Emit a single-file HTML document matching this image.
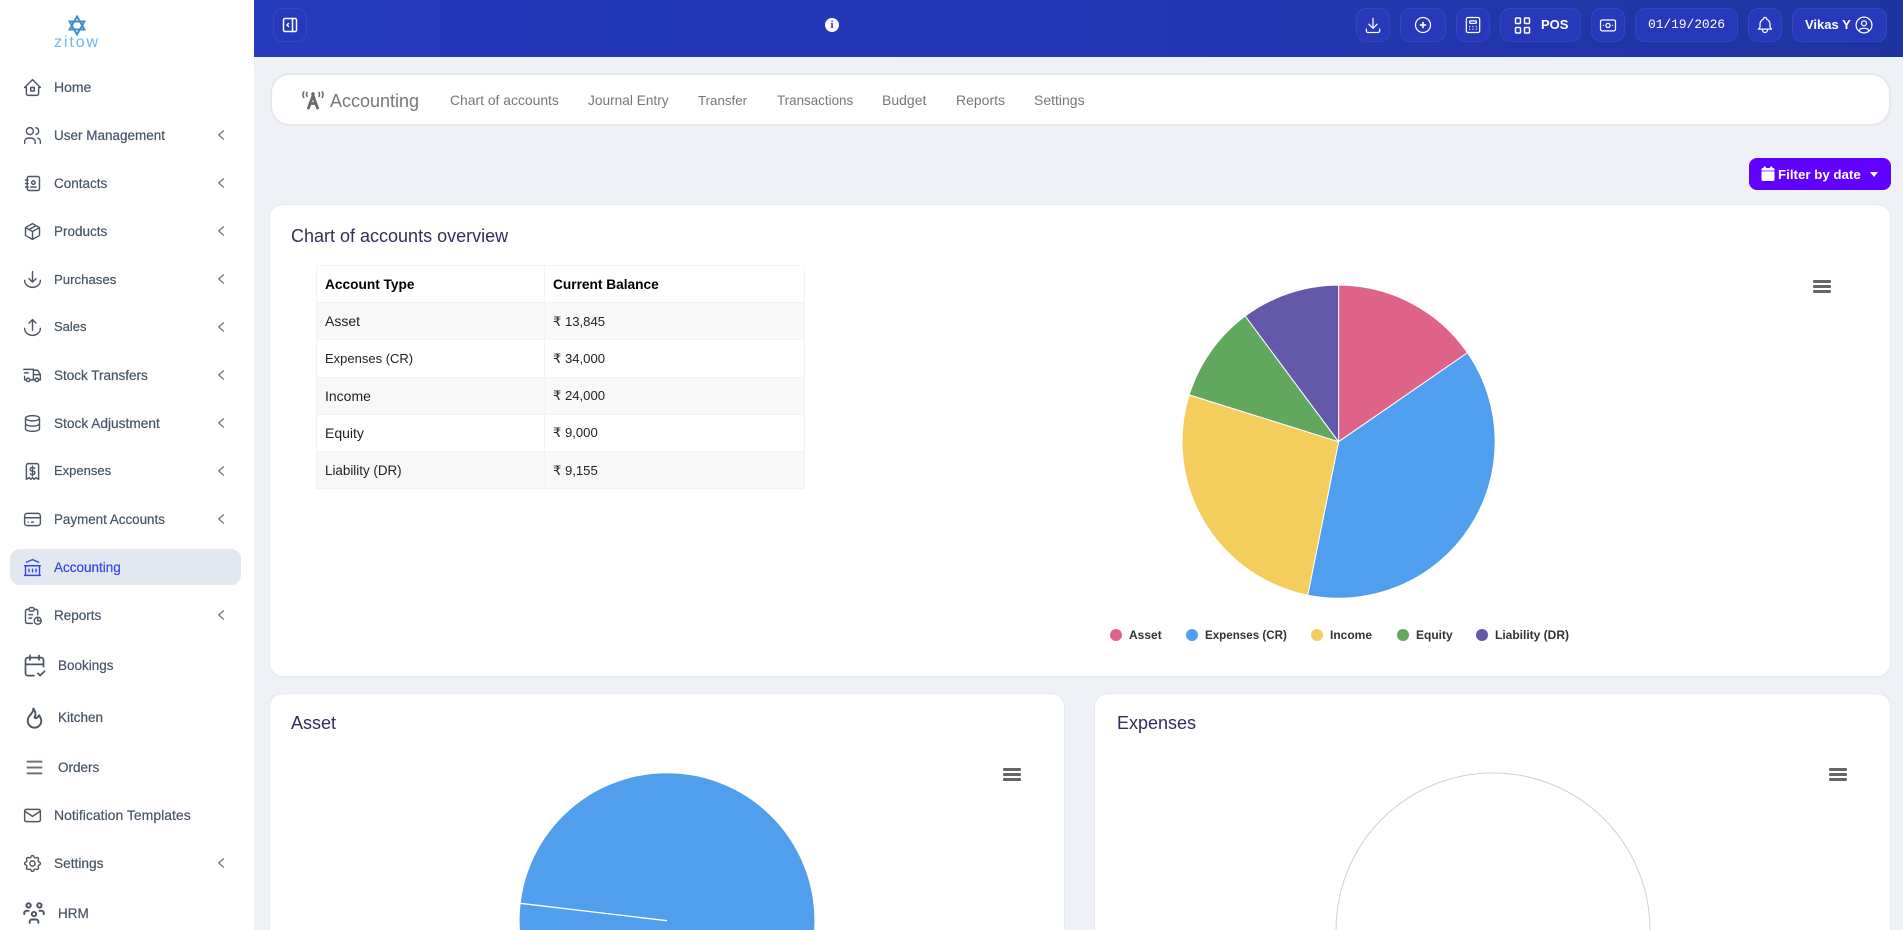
<!DOCTYPE html>
<html lang="en">
<head>
<meta charset="utf-8">
<title>Accounting</title>
<style>
html,body{margin:0;padding:0;width:1903px;height:930px;overflow:hidden;background:#eef1f6;font-family:"Liberation Sans",Arial,sans-serif}
*{box-sizing:border-box}
#wrap{position:relative;width:1903px;height:930px;overflow:hidden;background:#eef1f6}
.a{position:absolute}
#side{position:absolute;left:0;top:0;width:254px;height:930px;background:#fff;overflow:hidden}
.n{position:absolute;left:54px;height:36px;line-height:37px;font-size:13.5px;color:#475467;white-space:nowrap;-webkit-text-stroke:.2px #475467}
.n.b{left:58px}
.ic{position:absolute;left:21.5px;width:21px;height:21px;fill:none;stroke:#4b5563;stroke-width:1.6;stroke-linecap:round;stroke-linejoin:round}
.ch{position:absolute;left:218px;width:6px;height:10px;fill:none;stroke:#6b7280;stroke-width:1.3;stroke-linecap:round;stroke-linejoin:round}
#top{position:absolute;left:254px;top:0;width:1649px;height:57px;background:linear-gradient(90deg,#2539bd 0%,#2437b6 50%,#1f33a0 100%)}
.tb{position:absolute;top:8px;height:34px;background:#2739ba;border:1px solid #3346b8;border-radius:10px}
.ti{position:absolute;fill:none;stroke:#fff;stroke-width:1.5;stroke-linecap:round;stroke-linejoin:round}
.tt{position:absolute;color:#fff;white-space:nowrap;line-height:34px;top:8px}
.card{position:absolute;background:#fff;border:1px solid #e6e9ef;border-radius:14px}
.h{position:absolute;font-size:18px;color:#2f2f5c;white-space:nowrap;line-height:24px}
.l{position:absolute;top:90px;font-size:14px;line-height:20px;color:#777;white-space:nowrap}
table{position:absolute;left:316px;top:265px;width:489px;border-collapse:collapse;font-size:13.1px;color:#222;table-layout:fixed}
td,th{border:1px solid #f3f3f3;height:37.2px;padding:1px 0 0 8px;text-align:left;line-height:20px}
th{color:#000;font-weight:bold;font-size:13.7px}
tr.z td{background:#f8f8f8}
.lg{position:absolute;top:626px;font-size:12px;font-weight:bold;line-height:18px;color:#333;white-space:nowrap}
.d{position:absolute;top:628.7px;width:12px;height:12px;border-radius:50%}
.hb{position:absolute;width:18px;height:13px}
.hb i{position:absolute;left:0;width:100%;height:3.4px;background:#666;border-radius:1px}
</style>
</head>
<body>
<div id="wrap">

<div id="side">
  <svg class="a" style="left:68px;top:15px" width="18" height="21" viewBox="0 0 18 21" fill="none" stroke="#3d8fd0" stroke-width="1.9"><path d="M9 1.5L16.5 14.5H1.5Z"/><path d="M9 19.5L1.5 6.5H16.5Z"/></svg>
  <div class="a" style="left:54px;top:36px;font-size:16px;line-height:14px;letter-spacing:1.9px;color:#6db6ef">zitow</div>

  <svg class="ic" style="top:76.5px" viewBox="0 0 24 24"><path d="M5 12H3l9-9 9 9h-2M5 12v7a2 2 0 0 0 2 2h10a2 2 0 0 0 2-2v-7M10 12h4v4h-4z"/></svg>
  <div class="n" style="top:69px;font-size:14px;line-height:36px">Home</div>

  <svg class="ic" style="top:124.5px" viewBox="0 0 24 24"><path d="M5 7a4 4 0 1 0 8 0a4 4 0 1 0-8 0M3 21v-2a4 4 0 0 1 4-4h4a4 4 0 0 1 4 4v2M16 3.13a4 4 0 0 1 0 7.75M21 21v-2a4 4 0 0 0-3-3.85"/></svg>
  <div class="n" style="top:117px">User Management</div>
  <svg class="ch" style="top:130px" viewBox="0 0 6 10"><path d="M5.5.8L.8 5l4.7 4.2"/></svg>

  <svg class="ic" style="top:172.5px" viewBox="0 0 24 24"><path d="M20 6v12a2 2 0 0 1-2 2H8a2 2 0 0 1-2-2V6a2 2 0 0 1 2-2h10a2 2 0 0 1 2 2zM10 16h6M11 11a2 2 0 1 0 4 0a2 2 0 1 0-4 0M4 8h3M4 12h3M4 16h3"/></svg>
  <div class="n" style="top:165px">Contacts</div>
  <svg class="ch" style="top:178px" viewBox="0 0 6 10"><path d="M5.5.8L.8 5l4.7 4.2"/></svg>

  <svg class="ic" style="top:220.5px" viewBox="0 0 24 24"><path d="M12 3l8 4.5v9L12 21l-8-4.5v-9L12 3M12 12l8-4.5M12 12v9M12 12L4 7.5M16 5.25l-8 4.5"/></svg>
  <div class="n" style="top:213px">Products</div>
  <svg class="ch" style="top:226px" viewBox="0 0 6 10"><path d="M5.5.8L.8 5l4.7 4.2"/></svg>

  <svg class="ic" style="top:268.5px" viewBox="0 0 24 24"><path d="M12 3v12M8 11l4 4 4-4M3 13a9 8 0 0 0 18 0"/></svg>
  <div class="n" style="top:261px;font-size:13.2px">Purchases</div>
  <svg class="ch" style="top:274px" viewBox="0 0 6 10"><path d="M5.5.8L.8 5l4.7 4.2"/></svg>

  <svg class="ic" style="top:316.5px" viewBox="0 0 24 24"><path d="M12 15V3M8 7l4-4 4 4M3 13a9 8 0 0 0 18 0"/></svg>
  <div class="n" style="top:309px;font-size:13px;line-height:36px">Sales</div>
  <svg class="ch" style="top:322px" viewBox="0 0 6 10"><path d="M5.5.8L.8 5l4.7 4.2"/></svg>

  <svg class="ic" style="top:364.5px" viewBox="0 0 24 24"><path d="M5 17a2 2 0 1 0 4 0a2 2 0 1 0-4 0M15 17a2 2 0 1 0 4 0a2 2 0 1 0-4 0M5 17H3v-4M2 5h11v12M9 17h6M19 17h2v-6h-8M13 6h5l3 5M3 9h4"/></svg>
  <div class="n" style="top:357px">Stock Transfers</div>
  <svg class="ch" style="top:370px" viewBox="0 0 6 10"><path d="M5.5.8L.8 5l4.7 4.2"/></svg>

  <svg class="ic" style="top:412.5px" viewBox="0 0 24 24"><path d="M4 6a8 3 0 1 0 16 0a8 3 0 1 0-16 0M4 6v6a8 3 0 0 0 16 0V6M4 12v6a8 3 0 0 0 16 0v-6"/></svg>
  <div class="n" style="top:405px;font-size:13.7px">Stock Adjustment</div>
  <svg class="ch" style="top:418px" viewBox="0 0 6 10"><path d="M5.5.8L.8 5l4.7 4.2"/></svg>

  <svg class="ic" style="top:460.5px" viewBox="0 0 24 24"><path d="M5 21V5a2 2 0 0 1 2-2h10a2 2 0 0 1 2 2v16l-3-2-2 2-2-2-2 2-2-2-3 2M14.5 8.5a2 2 0 0 0-1.8-1h-1.4a2 2 0 0 0 0 4h1.400a2 2 0 0 1 0 4h-1.4a2 2 0 0 1-1.8-1M12 6v11"/></svg>
  <div class="n" style="top:453px;font-size:13px;line-height:36px">Expenses</div>
  <svg class="ch" style="top:466px" viewBox="0 0 6 10"><path d="M5.5.8L.8 5l4.7 4.2"/></svg>

  <svg class="ic" style="top:508.5px" viewBox="0 0 24 24"><rect x="3" y="5" width="18" height="14" rx="3"/><path d="M3 10h18M7 15h.01M11 15h2"/></svg>
  <div class="n" style="top:501px;font-size:13.4px">Payment Accounts</div>
  <svg class="ch" style="top:514px" viewBox="0 0 6 10"><path d="M5.5.8L.8 5l4.7 4.2"/></svg>

  <div class="a" style="left:10px;top:549px;width:231px;height:36px;background:#e3e7ef;border-radius:10px"></div>
  <svg class="ic" style="top:556.5px;stroke:#3346e8" viewBox="0 0 24 24"><path d="M3 21h18M3 10h18M5 6l7-3 7 3M4 10v11M20 10v11M8 14v3M12 14v3M16 14v3"/></svg>
  <div class="n" style="top:549px;color:#3346e8;-webkit-text-stroke:.2px #3346e8">Accounting</div>

  <svg class="ic" style="top:604.5px" viewBox="0 0 24 24"><path d="M8 5H6a2 2 0 0 0-2 2v12a2 2 0 0 0 2 2h5.7M18 14v4h4M18 11V7a2 2 0 0 0-2-2h-2M8 5a2 2 0 0 1 2-2h2a2 2 0 0 1 2 2a2 2 0 0 1-2 2h-2a2 2 0 0 1-2-2zM14 18a4 4 0 1 0 8 0a4 4 0 1 0-8 0M8 11h4M8 15h3"/></svg>
  <div class="n" style="top:597px">Reports</div>
  <svg class="ch" style="top:610px" viewBox="0 0 6 10"><path d="M5.5.8L.8 5l4.7 4.2"/></svg>

  <svg class="ic" style="left:20.5px;top:651.5px;width:27px;height:27px;stroke-width:1.5" viewBox="0 0 24 24"><path d="M11.5 21H6a2 2 0 0 1-2-2V7a2 2 0 0 1 2-2h12a2 2 0 0 1 2 2v6M16 3v4M8 3v4M4 11h16M15 19l2 2 4-4"/></svg>
  <div class="n b" style="top:647px">Bookings</div>

  <svg class="ic" style="left:20.5px;top:703.5px;width:27px;height:27px;stroke-width:1.7" viewBox="0 0 24 24"><path d="M12 12c2-2.96 0-7-1-8 0 3.038-1.773 4.741-3 6-1.226 1.26-2 3.24-2 5a6 6 0 1 0 12 0c0-1.532-1.056-3.94-2-5-1.786 3-2.791 3-4 2z"/></svg>
  <div class="n b" style="top:699px">Kitchen</div>

  <svg class="ic" style="left:23.5px;top:756.5px;stroke:#6b7280;stroke-width:2.2" viewBox="0 0 24 24"><path d="M4 5.3h16M4 12h16M4 18.7h16"/></svg>
  <div class="n b" style="top:749px">Orders</div>

  <svg class="ic" style="top:804.5px" viewBox="0 0 24 24"><rect x="3" y="5" width="18" height="14" rx="2"/><path d="M3 7l9 6 9-6"/></svg>
  <div class="n" style="top:797px;font-size:14px;line-height:36px">Notification Templates</div>

  <svg class="ic" style="top:852.5px" viewBox="0 0 24 24"><path d="M10.325 4.317c.426-1.756 2.924-1.756 3.35 0a1.724 1.724 0 0 0 2.573 1.066c1.543-.94 3.31.826 2.37 2.37a1.724 1.724 0 0 0 1.065 2.572c1.756.426 1.756 2.924 0 3.35a1.724 1.724 0 0 0-1.066 2.573c.94 1.543-.826 3.31-2.37 2.37a1.724 1.724 0 0 0-2.572 1.065c-.426 1.756-2.924 1.756-3.35 0a1.724 1.724 0 0 0-2.573-1.066c-1.543.94-3.31-.826-2.37-2.37a1.724 1.724 0 0 0-1.065-2.572c-1.756-.426-1.756-2.924 0-3.35a1.724 1.724 0 0 0 1.066-2.573c-.94-1.543.826-3.31 2.37-2.37 1 .608 2.296.07 2.572-1.065zM9 12a3 3 0 1 0 6 0a3 3 0 0 0-6 0"/></svg>
  <div class="n" style="top:845px;font-size:13.7px">Settings</div>
  <svg class="ch" style="top:858px" viewBox="0 0 6 10"><path d="M5.5.8L.8 5l4.7 4.2"/></svg>

  <svg class="ic" style="left:20.5px;top:900px;width:26px;height:26px;stroke-width:1.8" viewBox="0 0 24 24"><path d="M10 13a2 2 0 1 0 4 0a2 2 0 0 0-4 0M8 21v-1a2 2 0 0 1 2-2h4a2 2 0 0 1 2 2v1M15 5a2 2 0 1 0 4 0a2 2 0 0 0-4 0M17 10h2a2 2 0 0 1 2 2v1M5 5a2 2 0 1 0 4 0a2 2 0 0 0-4 0M3 13v-1a2 2 0 0 1 2-2h2"/></svg>
  <div class="n b" style="top:895px">HRM</div>
</div>

<div id="top"></div>
<div class="tb" style="left:273px;width:34px;background:transparent;border-color:#3547bf"></div>
<svg class="ti" style="left:282px;top:17px" width="16" height="16" viewBox="0 0 16 16" stroke-width="1.2"><rect x="1.5" y="1.5" width="13" height="13" rx="1.5"/><path d="M10.5 1.5v13M6.5 6.5L5 8l1.5 1.5"/></svg>
<div class="a" style="left:825px;top:18px;width:14px;height:14px;border-radius:50%;background:#fff;color:#2539bd;font:bold 11px/14px 'Liberation Serif',serif;text-align:center">i</div>

<div class="tb" style="left:1356px;width:34px"></div>
<svg class="ti" style="left:1363px;top:15px" width="20" height="20" viewBox="0 0 24 24"><path d="M4 17v2a2 2 0 0 0 2 2h12a2 2 0 0 0 2-2v-2M7 11l5 5 5-5M12 4v12"/></svg>
<div class="tb" style="left:1400px;width:46px"></div>
<svg class="ti" style="left:1413px;top:15px" width="20" height="20" viewBox="0 0 24 24"><circle cx="12" cy="12" r="9"/><path d="M9 12h6M12 9v6" stroke-width="2"/></svg>
<div class="tb" style="left:1456px;width:34px"></div>
<svg class="ti" style="left:1463px;top:15px" width="20" height="20" viewBox="0 0 24 24"><rect x="4" y="3" width="16" height="18" rx="2"/><rect x="8" y="7" width="8" height="3" rx="1"/><path d="M8 14v.01M12 14v.01M16 14v.01M8 17v.01M12 17v.01M16 17v.01"/></svg>
<div class="tb" style="left:1500px;width:81px"></div>
<svg class="ti" style="left:1514px;top:17px" width="17" height="17" viewBox="0 0 17 17" stroke-width="1.4"><rect x="1.5" y="1" width="5" height="5.5" rx="1"/><rect x="10.5" y="1" width="5" height="5.5" rx="1"/><rect x="1.5" y="10.5" width="5" height="5.5" rx="1"/><rect x="10.5" y="10.5" width="5" height="5.5" rx="1"/></svg>
<div class="tt" style="left:1541px;font-size:13px;font-weight:bold">POS</div>
<div class="tb" style="left:1591px;width:34px"></div>
<svg class="ti" style="left:1598px;top:15px" width="20" height="20" viewBox="0 0 24 24"><rect x="3" y="6" width="18" height="13" rx="2"/><circle cx="12" cy="12.5" r="2.5"/><path d="M6.5 12.5h.01M17.5 12.5h.01"/></svg>
<div class="tb" style="left:1635px;width:103px"></div>
<div class="tt" style="left:1648px;font:13px/34px 'Liberation Mono',monospace;letter-spacing:-.1px">01/19/2026</div>
<div class="tb" style="left:1748px;width:34px"></div>
<svg class="ti" style="left:1755px;top:15px" width="20" height="20" viewBox="0 0 24 24"><path d="M10 5a2 2 0 1 1 4 0a7 7 0 0 1 4 6v3a4 4 0 0 0 2 3H4a4 4 0 0 0 2-3v-3a7 7 0 0 1 4-6M9 17v1a3 3 0 0 0 6 0v-1"/></svg>
<div class="tb" style="left:1792px;width:95px"></div>
<div class="tt" style="left:1805px;font-size:13px;font-weight:bold">Vikas Y</div>
<svg class="ti" style="left:1854px;top:15px" width="20" height="20" viewBox="0 0 24 24"><circle cx="12" cy="12" r="9.5"/><circle cx="12" cy="10" r="3"/><path d="M6.5 18.5a4 4 0 0 1 4-2.5h3a4 4 0 0 1 4 2.5"/></svg>

<div class="a" style="left:270px;top:73px;width:1621px;height:53px;background:#fff;border:2px solid #e6e8eb;border-radius:20px"></div>
<svg class="a" style="left:301px;top:90px" width="24" height="20" viewBox="0 0 24 20" fill="none" stroke="#6b6b6b" stroke-linecap="round"><path d="M7.5 18L12 5.5 16.5 18M9 13.5h6" stroke-width="2.8"/><circle cx="12" cy="4" r="1.8" fill="#6b6b6b" stroke="none"/><path d="M2.8 2c-1.2 1.8-1.2 3.5 0 5.5M6 2.5c-.6 1-.6 2.5 0 4M21.2 2c1.2 1.8 1.2 3.5 0 5.5M18 2.5c.6 1 .6 2.5 0 4" stroke-width="1.6"/></svg>
<div class="a" style="left:330px;top:89px;font-size:18px;line-height:24px;color:#777;white-space:nowrap">Accounting</div>
<div class="l" style="left:450px;font-size:13.9px">Chart of accounts</div>
<div class="l" style="left:588px;font-size:13.7px;line-height:21px">Journal Entry</div>
<div class="l" style="left:698px;font-size:13.3px;line-height:21px">Transfer</div>
<div class="l" style="left:777px;font-size:13.4px;line-height:21px">Transactions</div>
<div class="l" style="left:882px">Budget</div>
<div class="l" style="left:956px">Reports</div>
<div class="l" style="left:1034px">Settings</div>

<div class="a" style="left:1749px;top:158px;width:142px;height:32px;background:#6000ff;border-radius:8px"></div>
<svg class="a" style="left:1761px;top:166px" width="14" height="15" viewBox="0 0 14 15" fill="#fff"><rect x="0.5" y="2" width="13" height="13" rx="1.5"/><rect x="2.5" y="0.5" width="2.5" height="3" rx=".8"/><rect x="9" y="0.5" width="2.5" height="3" rx=".8"/><rect x="0.5" y="4.6" width="13" height=".7" fill="#6000ff"/></svg>
<div class="a" style="left:1778px;top:164px;font-size:13.3px;line-height:21px;font-weight:bold;color:#fff;white-space:nowrap">Filter by date</div>
<div class="a" style="left:1869.5px;top:172px;border-left:4.5px solid transparent;border-right:4.5px solid transparent;border-top:5px solid #fff"></div>

<div class="card" style="left:269px;top:204px;width:1622px;height:473px"></div>
<div class="h" style="left:291px;top:224px">Chart of accounts overview</div>

<table>
  <colgroup><col style="width:228px"><col></colgroup>
  <tr><th>Account Type</th><th>Current Balance</th></tr>
  <tr class="z"><td style="font-size:14px;padding-top:0">Asset</td><td>₹ 13,845</td></tr>
  <tr><td style="font-size:13px">Expenses (CR)</td><td>₹ 34,000</td></tr>
  <tr class="z"><td style="font-size:14px;padding-top:0">Income</td><td>₹ 24,000</td></tr>
  <tr><td style="font-size:14px;padding-top:0">Equity</td><td>₹ 9,000</td></tr>
  <tr class="z"><td style="font-size:13.4px">Liability (DR)</td><td>₹ 9,155</td></tr>
</table>

<svg class="a" style="left:0;top:0" width="1903" height="930" viewBox="0 0 1903 930">
  <g stroke="#fff" stroke-width="1" stroke-linejoin="round">
    <path fill="#df6388" d="M1338.6 441.7L1338.6 285.1A156.6 156.6 0 0 1 1467.5 352.75Z"/>
    <path fill="#4f9fee" d="M1338.6 441.7L1467.5 352.75A156.6 156.6 0 0 1 1307.7 595.2Z"/>
    <path fill="#f4ce5c" d="M1338.6 441.7L1307.7 595.2A156.6 156.6 0 0 1 1189.2 394.9Z"/>
    <path fill="#62a75e" d="M1338.6 441.7L1189.2 394.9A156.6 156.6 0 0 1 1245.2 316Z"/>
    <path fill="#6459a8" d="M1338.6 441.7L1245.2 316A156.6 156.6 0 0 1 1338.6 285.1Z"/>
  </g>
</svg>

<div class="hb" style="left:1813px;top:280px"><i style="top:0"></i><i style="top:4.8px"></i><i style="top:9.6px"></i></div>

<div class="d" style="left:1110px;background:#df6388"></div><div class="lg" style="left:1129px">Asset</div>
<div class="d" style="left:1186px;background:#4f9fee"></div><div class="lg" style="left:1205px;font-size:11.6px;line-height:19px">Expenses (CR)</div>
<div class="d" style="left:1311px;background:#f4ce5c"></div><div class="lg" style="left:1330px">Income</div>
<div class="d" style="left:1397px;background:#62a75e"></div><div class="lg" style="left:1416px">Equity</div>
<div class="d" style="left:1476px;background:#6459a8"></div><div class="lg" style="left:1495px">Liability (DR)</div>

<div class="card" style="left:269px;top:693px;width:796px;height:237px;border-bottom:0;border-radius:14px 14px 0 0"></div>
<div class="h" style="left:291px;top:711px">Asset</div>
<div class="hb" style="left:1003px;top:768px"><i style="top:0"></i><i style="top:4.8px"></i><i style="top:9.6px"></i></div>

<div class="card" style="left:1094px;top:693px;width:797px;height:237px;border-bottom:0;border-radius:14px 14px 0 0"></div>
<div class="h" style="left:1117px;top:711px">Expenses</div>
<div class="hb" style="left:1829px;top:768px"><i style="top:0"></i><i style="top:4.8px"></i><i style="top:9.6px"></i></div>

<svg class="a" style="left:0;top:0" width="1903" height="930" viewBox="0 0 1903 930">
  <path d="M519.9 930A147.4 147.4 0 1 1 814.1 930Z" fill="#519fec"/>
  <path d="M520 903.3L667 920.7" stroke="#fff" stroke-width="1.3" fill="none"/>
  <path d="M1336 930A157 157 0 1 1 1650 930" fill="#fff" stroke="#d0d0d0" stroke-width="1"/>
</svg>

</div>
</body>
</html>
